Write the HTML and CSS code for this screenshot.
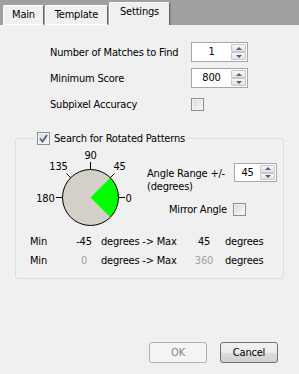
FILE: index.html
```html
<html>
  <head>
    <link rel="stylesheet" href="styles.css">
  </head>
  <body>
    <div class="tabs">
      <div class="tab tab-main">Main</div>
      <div class="tab tab-template">Template</div>
      <div class="tab tab-active">Settings</div>
    </div>
    <div class="pane">
      <div class="fields">
        <div class="field">
          <label>Number of Matches to Find</label>
          <div class="spin">
            <span class="spin-value">1</span>
            <span class="spin-btns"><span class="spin-btn spin-up"></span><span class="spin-btn spin-down"></span></span>
          </div>
        </div>
        <div class="field">
          <label>Minimum Score</label>
          <div class="spin">
            <span class="spin-value">800</span>
            <span class="spin-btns"><span class="spin-btn spin-up"></span><span class="spin-btn spin-down"></span></span>
          </div>
        </div>
        <div class="field field-check">
          <label>Subpixel Accuracy</label>
          <span class="check"></span>
        </div>
      </div>

      <fieldset class="group">
        <legend>
          <span class="check">
            <svg width="11" height="11" viewBox="0 0 11 11"><polyline points="2,5.5 4.5,8.5 9,2" fill="none" stroke="#4a5f96" stroke-width="1.8"/></svg>
          </span>
          <span>Search for Rotated Patterns</span>
        </legend>

        <div class="dial-row">
          <svg class="dial" width="105" height="84" viewBox="0 0 105 84">
            <circle cx="60.5" cy="50.5" r="28" fill="#d4d0c8"/>
            <path d="M60.5 50.5 L80.3 30.7 A28 28 0 0 1 80.3 70.3 Z" fill="#00ff00"/>
            <circle cx="60.5" cy="50.5" r="28" fill="none" stroke="#000"/>
            <path d="M60.5 15 V22.5 M88.5 50.5 H95 M26 50.5 H32.5 M40.7 30.7 L36.5 26.5 M80.3 30.7 L84.5 26.5" stroke="#000" fill="none"/>
            <text x="60.5" y="12" text-anchor="middle">90</text>
            <text x="28.5" y="23" text-anchor="middle">135</text>
            <text x="89.5" y="23" text-anchor="middle">45</text>
            <text x="24.5" y="55" text-anchor="end">180</text>
            <text x="95.5" y="55">0</text>
          </svg>
          <div class="angle">
            <div class="angle-range">
              <label>Angle Range +/-<br>(degrees)</label>
              <div class="spin spin-small">
                <span class="spin-value">45</span>
                <span class="spin-btns"><span class="spin-btn spin-up"></span><span class="spin-btn spin-down"></span></span>
              </div>
            </div>
            <div class="mirror">
              <label>Mirror Angle</label>
              <span class="check"></span>
            </div>
          </div>
        </div>

        <div class="ranges">
          <span>Min</span>
          <span class="num">-45</span>
          <span class="to">degrees -&gt; Max</span>
          <span class="num">45</span>
          <span class="unit">degrees</span>
          <span>Min</span>
          <span class="num dim">0</span>
          <span class="to">degrees -&gt; Max</span>
          <span class="num dim">360</span>
          <span class="unit">degrees</span>
        </div>
      </fieldset>

      <div class="buttons">
        <button class="btn" disabled>OK</button>
        <button class="btn">Cancel</button>
      </div>
    </div>
  </body>
</html>
```

FILE: styles.css
```css
* {
  box-sizing: border-box;
  font-family: "DejaVu Sans Condensed", "DejaVu Sans", sans-serif;
  font-size: 11px;
  letter-spacing: -0.2px;
}

body {
  margin: 0;
  background: #f0f0f0;
  color: #000;
}

/* tab strip */
.tabs {
  display: flex;
  align-items: flex-end;
  height: 25px;
  padding-left: 3px;
  background: #a0a0a0;
}

.tab {
  height: 20px;
  padding: 0;
  margin-right: 1px;
  text-align: center;
  line-height: 18px;
  background: #f0f0f0;
  border-top: 1px solid #fff;
  border-left: 1px solid #fff;
  border-right: 1px solid #696969;
  border-bottom: 1px solid #fff;
  border-radius: 2px 2px 0 0;
}

.tab-main {
  width: 41px;
}

.tab-template {
  width: 63px;
}

.tab-active {
  width: 61px;
  height: 23px;
  border-bottom: none;
  margin-right: 0;
  box-shadow: 1px 0 0 #8a8a8a;
}

.pane {
  padding-top: 17px;
}

/* top fields */
.fields {
  margin-left: 50px;
}

.field {
  display: flex;
  align-items: center;
  height: 20px;
  margin-bottom: 6px;
}

.field label {
  width: 141px;
}

.field-check {
  margin-top: 4px;
  margin-bottom: 0;
}

.spin {
  display: flex;
  width: 57px;
  height: 20px;
  border: 1px solid #a7a7a7;
  background: #fff;
}

.spin-small {
  width: 43px;
  height: 19px;
}

.spin-value {
  flex: 1;
  text-align: center;
  line-height: 18px;
}

.spin-btns {
  display: flex;
  flex-direction: column;
  width: 16px;
  padding: 1px 1px 1px 0;
}

.spin-btn {
  flex: 1;
  display: flex;
  align-items: center;
  justify-content: center;
  border: 1px solid #c9c9c9;
  border-radius: 1px;
  background: linear-gradient(#f7f7f7, #e2e2e2);
}

.spin-up::after {
  content: "";
  border-left: 3px solid transparent;
  border-right: 3px solid transparent;
  border-bottom: 3px solid #4d5f8c;
}

.spin-down::after {
  content: "";
  border-left: 3px solid transparent;
  border-right: 3px solid transparent;
  border-top: 3px solid #4d5f8c;
}

.check {
  display: flex;
  align-items: center;
  justify-content: center;
  width: 13px;
  height: 13px;
  border: 1px solid #8e8f8f;
  background: linear-gradient(135deg, #d8d8d8, #fbfbfb);
  box-shadow: inset 0 0 0 1px #f3f3f3;
}

/* rotated patterns group */
.group {
  margin: 16px 15px 0;
  padding: 0 0 11px;
  min-width: 0;
  border: 1px solid #d5dfe5;
  border-radius: 3px;
}

.group legend {
  display: flex;
  align-items: center;
  gap: 4px;
  height: 16px;
  margin-left: 19px;
  padding: 0 3px 0 2px;
}

.dial-row {
  display: flex;
  margin: 1px 0 0 14px;
}

.dial {
  display: block;
}

.angle {
  margin-left: 12px;
  margin-top: 16px;
}

.angle-range {
  display: flex;
}

.angle-range label {
  width: 87px;
  line-height: 13px;
  padding-top: 4px;
}

.mirror {
  display: flex;
  align-items: center;
  height: 13px;
  margin-top: 10px;
  margin-left: 22px;
}

.mirror label {
  width: 64px;
}

.ranges {
  display: grid;
  grid-template-columns: 42px 24px 98px 20px auto;
  row-gap: 6px;
  line-height: 13px;
  margin: 4px 0 0 14px;
}

.ranges .num {
  text-align: center;
}

.ranges .to {
  padding-left: 5px;
}

.ranges .unit {
  padding-left: 11px;
}

.dim {
  color: #a0a0a0;
}

/* dialog buttons */
.buttons {
  display: flex;
  justify-content: flex-end;
  gap: 13px;
  padding-right: 21px;
  margin-top: 63px;
}

.btn {
  width: 58px;
  height: 21px;
  padding: 0;
  border: 1px solid #707070;
  border-radius: 3px;
  background: linear-gradient(#f2f2f2 0%, #ebebeb 50%, #dddddd 51%, #cfcfcf 100%);
  color: #000;
}

.btn:disabled {
  border-color: #adb2b5;
  background: #f4f4f4;
  color: #838383;
}
```
